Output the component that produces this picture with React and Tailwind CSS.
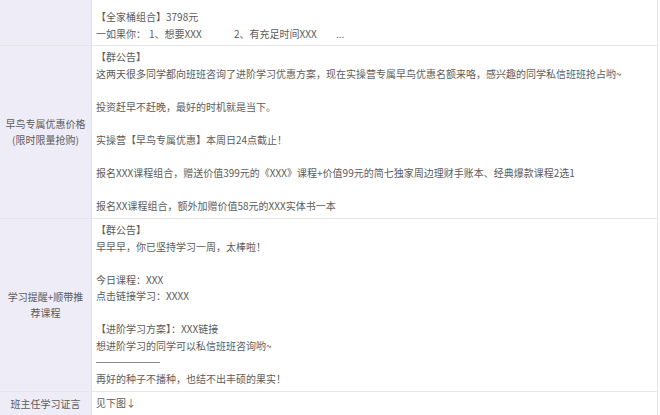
const font = {
  fontFamily: '"Noto Sans CJK SC", "Noto Sans", sans-serif',
};

function Row({ label, children, className = "" }) {
  return (
    <div className={`flex border-b border-[#e6e6e6] ${className}`}>
      <div className="w-[92px] shrink-0 bg-[#eeecf7] border-r border-[#e2e0ec] flex items-center justify-center text-center text-[#5c5c5c] px-1">
        {label}
      </div>
      <div className="flex-1 pl-[4px] pr-2 pt-[3px] pb-[4px] text-[#5c5c5c]">
        {children}
      </div>
    </div>
  );
}

function Blank() {
  return <div className="h-[16.5px]" />;
}

export default function App() {
  return (
    <div
      className="w-[660px] h-[415px] overflow-hidden bg-white text-[10px] leading-[16.5px]"
      style={font}
    >
      <div className="w-[658px] border-r border-[#e6e6e6] bg-white">
        <div className="flex h-[46px] border-b border-[#e6e6e6]">
          <div className="w-[92px] shrink-0 bg-[#eeecf7] border-r border-[#e2e0ec]" />
          <div className="flex-1 flex flex-col justify-end pl-[4px] pb-[3px] text-[#5c5c5c]">
            <div>【全家桶组合】3798元</div>
            <div className="flex whitespace-nowrap">
              <span className="w-[53px]">一如果你：</span>
              <span className="w-[85px]">1、想要XXX</span>
              <span className="w-[102px]">2、有充足时间XXX</span>
              <span>...</span>
            </div>
          </div>
        </div>

        <Row
          label={
            <div>
              早鸟专属优惠价格
              <br />
              (限时限量抢购)
            </div>
          }
        >
          <div>【群公告】</div>
          <div className="whitespace-nowrap">
            这两天很多同学都向班班咨询了进阶学习优惠方案，现在实操营专属早鸟优惠名额来咯，感兴趣的同学私信班班抢占哟~
          </div>
          <Blank />
          <div>投资赶早不赶晚，最好的时机就是当下。</div>
          <Blank />
          <div>实操营【早鸟专属优惠】本周日24点截止！</div>
          <Blank />
          <div className="whitespace-nowrap">
            报名XXX课程组合，赠送价值399元的《XXX》课程+价值99元的简七独家周边理财手账本、经典爆款课程2选1
          </div>
          <Blank />
          <div>报名XX课程组合，额外加赠价值58元的XXX实体书一本</div>
        </Row>

        <Row
          label={
            <div>
              学习提醒+顺带推
              <br />
              荐课程
            </div>
          }
        >
          <div>【群公告】</div>
          <div>早早早，你已坚持学习一周，太棒啦！</div>
          <Blank />
          <div>今日课程：XXX</div>
          <div>点击链接学习：XXXX</div>
          <Blank />
          <div>【进阶学习方案】：XXX链接</div>
          <div>想进阶学习的同学可以私信班班咨询哟~</div>
          <div className="h-[16.5px] flex items-center">
            <div className="w-[64px] h-px bg-[#8a8a8a]" />
          </div>
          <div>再好的种子不播种，也结不出丰硕的果实！</div>
        </Row>

        <Row label={<div>班主任学习证言</div>}>
          <div>见下图↓</div>
        </Row>
      </div>
      <div className="h-[4px] bg-[#f4f4f4]" />
    </div>
  );
}
